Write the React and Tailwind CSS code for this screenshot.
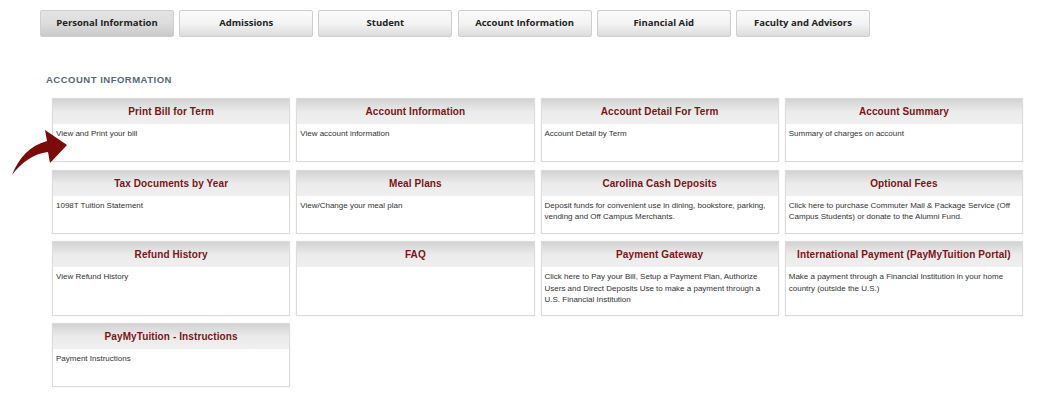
import React from 'react';

const tabs = ['Personal Information', 'Admissions', 'Student', 'Account Information', 'Financial Aid', 'Faculty and Advisors'];

const cards = [
  { title: 'Print Bill for Term', text: 'View and Print your bill' },
  { title: 'Account Information', text: 'View account information' },
  { title: 'Account Detail For Term', text: 'Account Detail by Term' },
  { title: 'Account Summary', text: 'Summary of charges on account' },
  { title: 'Tax Documents by Year', text: '1098T Tuition Statement' },
  { title: 'Meal Plans', text: 'View/Change your meal plan' },
  { title: 'Carolina Cash Deposits', text: 'Deposit funds for convenient use in dining, bookstore, parking, vending and Off Campus Merchants.' },
  { title: 'Optional Fees', text: 'Click here to purchase Commuter Mail & Package Service (Off Campus Students) or donate to the Alumni Fund.' },
  { title: 'Refund History', text: 'View Refund History' },
  { title: 'FAQ', text: '' },
  { title: 'Payment Gateway', text: 'Click here to Pay your Bill, Setup a Payment Plan, Authorize Users and Direct Deposits Use to make a payment through a U.S. Financial Institution' },
  { title: 'International Payment (PayMyTuition Portal)', text: 'Make a payment through a Financial Institution in your home country (outside the U.S.)' },
  { title: 'PayMyTuition - Instructions', text: 'Payment Instructions' },
];

function Card({ title, text }) {
  return (
    <div className="flex flex-col border border-[#dcdcdc] bg-white shadow-[0_0_1px_rgba(0,0,0,0.12)]">
      <div className="h-[25px] flex items-center justify-center bg-linear-to-b from-[#d2d2d2] via-[#ebebeb] to-[#efefef] text-[10px] font-bold tracking-[0.1px] text-[#7a1416]">
        {title}
      </div>
      <div className="flex-1 min-h-[37px] px-[3px] pt-[4px] pb-[9px] text-[8px] leading-[11.5px] text-[#333]">
        {text}
      </div>
    </div>
  );
}

export default function App() {
  return (
    <div className="relative w-[1039px] h-[415px] bg-white overflow-hidden font-['Liberation_Sans',Arial,sans-serif]">
      {/* Top tabs */}
      <div className="flex gap-[5.2px] pl-[40px] pt-[10px]">
        {tabs.map((t, i) => (
          <div
            key={t}
            className={`w-[134px] h-[27px] flex items-center justify-center rounded-[2px] border border-[#cfcfcf] font-['Open_Sans',sans-serif] text-[9.5px] font-bold text-[#222] ${
              i === 0
                ? 'bg-linear-to-b from-[#e4e4e4] via-[#dcdcdc] to-[#c9c9c9]'
                : 'bg-linear-to-b from-[#fbfbfb] via-[#f3f3f3] to-[#dcdcdc]'
            }`}
          >
            {t}
          </div>
        ))}
      </div>

      <h2 className="mt-[37px] ml-[46px] text-[9.5px] font-bold tracking-[0.5px] text-[#55697a] leading-[12px]">
        ACCOUNT INFORMATION
      </h2>

      <div className="mt-[12px] ml-[52px] w-[971px] grid grid-cols-4 gap-x-[6px] gap-y-[7.5px]">
        {cards.map((c) => (
          <Card key={c.title} {...c} />
        ))}
      </div>

      {/* Pointer arrow */}
      <svg className="absolute left-0 top-0 pointer-events-none" width="90" height="190" viewBox="0 0 90 190">
        <path
          d="M12,175 C19,158 29,146 47,141 L45,130 L67,145 L50,163 L48,152 C33,154 22,162 12,175 Z"
          fill="#7b0a0a"
        />
      </svg>
    </div>
  );
}
